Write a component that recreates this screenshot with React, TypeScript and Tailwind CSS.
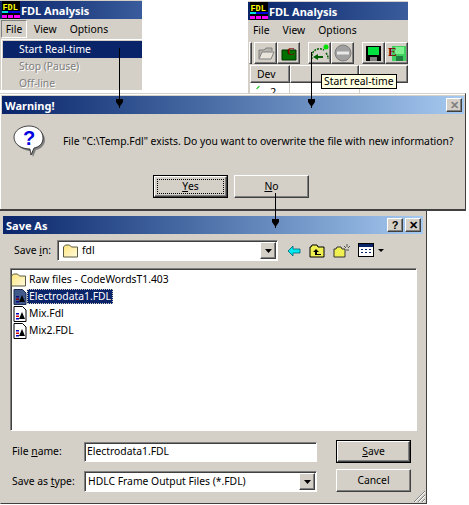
import { ReactNode } from "react"

const gray = "bg-[#d4d0c8]"
const font = "font-['Noto_Sans',sans-serif] text-[10.35px] leading-none"
const raised = "border border-t-white border-l-white border-r-[#404040] border-b-[#404040] shadow-[inset_-1px_-1px_0_#808080]"
const sunken = "border border-t-[#808080] border-l-[#808080] border-r-white border-b-white shadow-[inset_1px_1px_0_#404040]"

function Logo() {
  return (
    <svg width="18" height="18" viewBox="0 0 18 18" className="shrink-0">
      <rect width="18" height="18" fill="#000" />
      <rect x="0" y="10" width="6" height="2" fill="#00e0e0" />
      <rect x="6" y="10" width="12" height="2" fill="#0000e0" />
      <rect x="0" y="14" width="18" height="3" fill="#ff00ff" />
      <rect x="5" y="14" width="1" height="3" fill="#000" />
      <rect x="11" y="14" width="1" height="3" fill="#000" />
      <text x="0.5" y="9" fontSize="8.5" fontWeight="bold" fill="#ffff00" fontFamily="Liberation Mono">FDL</text>
    </svg>
  )
}

function TitleBar({ title, wide, logo, children }: { title: string; wide?: boolean; logo?: boolean; children?: ReactNode }) {
  return (
    <div className={`flex items-center h-[18px] bg-gradient-to-r from-[#0a246a] ${wide ? "to-[#a6caf0]" : "to-[#3a5c9c]"} pl-[2px] pr-[2px]`}>
      {logo && <Logo />}
      <span className="ml-[1px] text-white font-bold font-['Noto_Sans',sans-serif] text-[11px]">{title}</span>
      <div className="ml-auto flex gap-[2px]">{children}</div>
    </div>
  )
}

function CaptionButton({ glyph, dim }: { glyph: string; dim?: boolean }) {
  return (
    <div className={`${gray} ${raised} w-[16px] h-[14px] flex items-center justify-center font-['Liberation_Sans',sans-serif] font-bold text-[11px] ${dim ? "text-[#808080]" : "text-black"}`}>
      {glyph}
    </div>
  )
}

function Arrow({ x, y, h }: { x: number; y: number; h: number }) {
  return (
    <svg width="7" height={h} viewBox={`0 0 7 ${h}`} className="absolute z-20" style={{ left: x - 3, top: y }}>
      <path d={`M3.5 0V${h}`} stroke="#000" strokeWidth="1" />
      <path d={`M0 ${h - 9}H7V${h - 6}L3.5 ${h - 1}L0 ${h - 6}Z`} fill="#000" />
    </svg>
  )
}

function WinButton({ under, rest, isDefault }: { under: string; rest: string; isDefault?: boolean }) {
  return (
    <div className={`w-[75px] h-[23px] ${isDefault ? "border border-black" : ""}`}>
      <div className={`${raised} w-full h-full flex items-center justify-center text-black ${font}`}>
        <span className="underline">{under}</span>
        {rest}
      </div>
    </div>
  )
}

function FolderIcon() {
  return (
    <svg width="15" height="14" viewBox="0 0 15 14" className="shrink-0">
      <defs>
        <linearGradient id="folderFill" x1="0" y1="0" x2="1" y2="1">
          <stop offset="0" stopColor="#ffe47a" />
          <stop offset="1" stopColor="#fffbe0" />
        </linearGradient>
      </defs>
      <path d="M.5 3L2.500 1H6.500L8.500 3H14.500V13H.5Z" fill="url(#folderFill)" stroke="#5a5a40" />
    </svg>
  )
}

function FdlFileIcon({ selected }: { selected?: boolean }) {
  return (
    <svg width="14" height="16" viewBox="0 0 14 16" className="shrink-0">
      <path d="M1 .5H9.5L13 4V15.5H1Z" fill={selected ? "#42598c" : "#fff"} stroke={selected ? "#1a2a50" : "#000"} />
      <rect x="3" y="7" width="3" height="1.5" fill={selected ? "#0a0a80" : "#0000c0"} />
      <rect x="3" y="9.5" width="3" height="1.5" fill={selected ? "#800000" : "#e00000"} />
      <rect x="3" y="12" width="3" height="1.5" fill={selected ? "#0a0a80" : "#0000c0"} />
      <path d="M6 13L9 6L12 13Z" fill="#000" />
    </svg>
  )
}

function ToolButton({ children }: { children: ReactNode }) {
  return <div className={`${raised} w-[23px] h-[22px] flex items-center justify-center shrink-0`}>{children}</div>
}

function Toolbar() {
  return (
    <div className="flex items-center h-[24px] pl-[1px]">
      <div className={`${raised} w-[3px] h-[22px] mr-[2px]`} />
      <ToolButton>
        <svg width="18" height="16" viewBox="0 0 18 16">
          <path d="M2 14V5H7L9 3H15V6" fill="#b8b4ac" stroke="#808080" />
          <path d="M2 14L5 7H17L14 14Z" fill="#e8e4dc" stroke="#808080" />
        </svg>
      </ToolButton>
      <ToolButton>
        <svg width="16" height="16" viewBox="0 0 16 16">
          <path d="M1 5H15V15H1Z" fill="#007000" stroke="#003000" />
          <text x="6" y="10" fontSize="11" fontWeight="bold" fill="#800000" fontFamily="Liberation Serif">C</text>
        </svg>
      </ToolButton>
      <div className="w-[8px]" />
      <ToolButton>
        <svg width="20" height="18" viewBox="0 0 20 18">
          <path d="M2 15A8 8 0 0 1 14 6" fill="none" stroke="#006000" strokeWidth="1.5" strokeDasharray="2 1" />
          <path d="M16 9A8 8 0 0 1 18 15" fill="none" stroke="#006000" strokeWidth="1.5" strokeDasharray="2 1" />
          <circle cx="16" cy="3" r="2.5" fill="#00e000" />
          <path d="M3 13L8 10V12H13V14H8V16Z" fill="#006000" />
        </svg>
      </ToolButton>
      <ToolButton>
        <svg width="18" height="18" viewBox="0 0 18 18">
          <circle cx="9" cy="9" r="8" fill="#a0a0a0" stroke="#808080" />
          <rect x="3" y="7.5" width="12" height="3" fill="#e8e8e8" />
        </svg>
      </ToolButton>
      <div className="w-[8px]" />
      <ToolButton>
        <svg width="15" height="15" viewBox="0 0 15 15">
          <rect width="15" height="15" fill="#000" />
          <rect x="2" y="1" width="11" height="8" fill="#00e040" />
          <rect x="4" y="11" width="7" height="4" fill="#808080" />
        </svg>
      </ToolButton>
      <ToolButton>
        <svg width="18" height="18" viewBox="0 0 18 18">
          <rect x="4" y="2" width="14" height="15" fill="#40d060" />
          <rect x="7" y="3" width="9" height="7" fill="#80f090" />
          <rect x="8" y="12" width="7" height="5" fill="#208040" />
          <text x="0" y="12" fontSize="13" fontWeight="bold" fill="#800000" fontFamily="Liberation Serif">E</text>
        </svg>
      </ToolButton>
    </div>
  )
}

function LeftFragment() {
  return (
    <div className={`absolute left-0 top-0 w-[142px] h-[90px] ${gray} pt-[1px] ${font}`}>
      <TitleBar title="FDL Analysis" logo />
      <div className="flex items-center h-[20px] text-black">
        <div className="border border-t-[#808080] border-l-[#808080] border-r-white border-b-white w-[26px] h-[18px] flex items-center justify-center ml-[1px]">
          File
        </div>
        <div className="ml-[7px]">View</div>
        <div className="ml-[13px]">Options</div>
      </div>
      <div className="border-l border-t border-white ml-[1px] h-[51px] pt-[1px] pl-[1px]">
        <div className="h-[17px] bg-[#0a246a] text-white flex items-center pl-[16px]">Start Real-time</div>
        <div className="h-[17px] text-[#808080] flex items-center pl-[16px] [text-shadow:1px_1px_0_#fff]">Stop (Pause)</div>
        <div className="h-[17px] text-[#808080] flex items-center pl-[16px] [text-shadow:1px_1px_0_#fff]">Off-line</div>
      </div>
    </div>
  )
}

function RightFragment() {
  return (
    <div className={`absolute left-[248px] top-[1px] w-[160px] h-[92px] ${gray} overflow-hidden ${font}`}>
      <div className="pt-[1px]">
        <TitleBar title="FDL Analysis" logo />
      </div>
      <div className="flex items-center h-[21px] text-black pl-[5px] gap-[13px]">
        <span>File</span>
        <span>View</span>
        <span>Options</span>
      </div>
      <Toolbar />
      <div className="flex pl-[2px] h-[18px] text-black">
        <div className={`${raised} w-[40px] flex items-center pl-[6px]`}>Dev</div>
        <div className={`${raised} w-[70px]`} />
        <div className={`${raised} w-[50px]`} />
      </div>
      <div className="bg-white ml-[2px] h-[11px] relative text-black">
        <span className="absolute left-[6px] top-[4px] w-[4px] h-[1px] bg-[#00c000] -rotate-45" />
        <span className="absolute left-[20px] top-[3px] text-[11px]">2</span>
        <span className="absolute left-[39px] top-0 w-[1px] h-full bg-[#d4d0c8]" />
        <span className="absolute left-[109px] top-0 w-[1px] h-full bg-[#d4d0c8]" />
      </div>
    </div>
  )
}

function WarningDialog() {
  return (
    <div className={`absolute left-0 top-[93px] w-[466px] h-[118px] ${gray} border-t border-t-[#d4d0c8] border-r border-r-[#404040] border-b-2 border-b-[#404040] ${font}`}>
      <div className="border-t border-l border-white h-full flex flex-col pt-[1px] pl-[1px] pr-[1px]">
        <TitleBar title="Warning!" wide>
          <CaptionButton glyph="✕" dim />
        </TitleBar>
        <div className="flex items-center pl-[11px] pt-[11px]">
          <svg width="33" height="33" viewBox="0 0 33 33" className="shrink-0">
            <path d="M17 3C25 3 32 8 32 15C32 20 28 24 23 25L20 32L18 26C10 26 3 21 3 14C3 8 9 3 17 3Z" fill="#808080" />
            <path d="M16 1C24 1 30 6 30 13C30 19 26 22 21 23L18 30L17 24C9 24 1 20 1 12C1 6 8 1 16 1Z" fill="#fff" stroke="#000" strokeWidth="0.7" />
            <text x="10" y="20" fontSize="20" fontWeight="bold" fill="#0000e0" fontFamily="Liberation Sans">?</text>
          </svg>
          <span className="ml-[17px] text-black whitespace-nowrap">File "C:\Temp.Fdl" exists. Do you want to overwrite the file with new information?</span>
        </div>
        <div className="flex justify-center gap-[6px] mt-[17px] pr-[4px]">
          <div className="w-[75px] h-[23px] border border-black">
            <div className={`${raised} w-full h-full flex items-center justify-center p-[2px]`}>
              <div className="w-full h-full border border-dotted border-black flex items-center justify-center text-black">
                <span className="underline">Y</span>es
              </div>
            </div>
          </div>
          <WinButton under="N" rest="o" />
        </div>
      </div>
    </div>
  )
}

function SaveToolbarIcons() {
  return (
    <div className="flex items-center ml-[9px] gap-[8px]">
      <svg width="14" height="12" viewBox="0 0 14 12">
        <path d="M1 6L6 1V4H13V8H6V11Z" fill="#00e8f0" stroke="#006070" strokeWidth="0.8" />
      </svg>
      <svg width="16" height="14" viewBox="0 0 16 14">
        <path d="M1 13V3H2L3 1H8L9 3H15V13Z" fill="#f0f050" stroke="#000" />
        <path d="M7 5L4 8H6V11H12V10H8V8H10Z" fill="#000" />
      </svg>
      <svg width="17" height="15" viewBox="0 0 17 15">
        <path d="M1 14V6H3L4 4H8L9 6H12V14Z" fill="#f0f050" stroke="#333" />
        <path d="M14 1V4M11 3L13 5M17 3L15 5M13 7H16" stroke="#555" fill="none" />
      </svg>
      <svg width="27" height="15" viewBox="0 0 27 15">
        <rect x=".5" y=".5" width="15" height="13" fill="#fff" stroke="#000" />
        <rect x="1" y="1" width="14" height="3" fill="#0a246a" />
        <path d="M3 6h2v1h-2zM7 6h2v1h-2zM11 6h2v1h-2zM3 9h2v1h-2zM7 9h2v1h-2zM11 9h2v1h-2z" fill="#0a246a" />
        <path d="M20 6H26L23 9Z" fill="#000" />
      </svg>
    </div>
  )
}

function FileRow({ name, selected, folder }: { name: string; selected?: boolean; folder?: boolean }) {
  return (
    <div className={`flex items-center h-[17px] ${folder ? "gap-[1px]" : "pl-[2px]"}`}>
      {folder ? <FolderIcon /> : <FdlFileIcon selected={selected} />}
      <span className={`px-[1px] h-[15px] flex items-center whitespace-nowrap ${selected ? "bg-[#0a246a] text-white border border-dotted border-[#d4d0c8]" : "text-black border border-transparent"}`}>{name}</span>
    </div>
  )
}

function DropArrow({ h }: { h: string }) {
  return (
    <div className={`${gray} ${raised} ml-auto w-[16px] ${h} flex items-center justify-center`}>
      <svg width="7" height="4" viewBox="0 0 7 4"><path d="M0 0H7L3.5 4Z" fill="#000" /></svg>
    </div>
  )
}

function SaveDialog() {
  return (
    <div className={`absolute left-0 top-[211px] w-[427px] h-[293px] ${gray} border-l border-r border-b border-r-[#404040] border-b-[#404040] border-l-[#d4d0c8] ${font}`}>
      <div className="pt-[5px] pl-[2px] pr-[3px]">
        <TitleBar title="Save As" wide>
          <CaptionButton glyph="?" />
          <CaptionButton glyph="✕" />
        </TitleBar>
      </div>
      <div className="flex items-center pl-[13px] pt-[6px]">
        <span className="w-[43px] text-black">Save <span className="underline">i</span>n:</span>
        <div className={`${sunken} w-[221px] h-[21px] bg-white flex items-center pl-[5px] pr-[1px] gap-[4px] text-black`}>
          <FolderIcon />
          <span>fdl</span>
          <DropArrow h="h-[17px]" />
        </div>
        <SaveToolbarIcons />
      </div>
      <div className={`${sunken} ml-[9px] mt-[7px] w-[407px] h-[163px] bg-white pt-[2px]`}>
        <FileRow name="Raw files - CodeWordsT1.403" folder />
        <FileRow name="Electrodata1.FDL" selected />
        <FileRow name="Mix.Fdl" />
        <FileRow name="Mix2.FDL" />
      </div>
      <div className="flex pl-[11px] pt-[10px]">
        <div className="flex flex-col">
          <div className="flex items-center h-[21px]">
            <span className="w-[72px] text-black">File <span className="underline">n</span>ame:</span>
            <div className={`${sunken} w-[233px] h-[20px] bg-white flex items-center pl-[2px] text-black`}>Electrodata1.FDL</div>
          </div>
          <div className="flex items-center h-[21px] mt-[9px]">
            <span className="w-[72px] text-black">Save as <span className="underline">t</span>ype:</span>
            <div className={`${sunken} w-[233px] h-[21px] bg-white flex items-center pl-[3px] pr-[1px] text-black`}>
              <span>HDLC Frame Output Files (*.FDL)</span>
              <DropArrow h="h-[17px]" />
            </div>
          </div>
        </div>
        <div className="flex flex-col ml-[19px] gap-[6px] -mt-[1px]">
          <WinButton under="S" rest="ave" isDefault />
          <WinButton under="" rest="Cancel" />
        </div>
      </div>
      <svg width="12" height="12" viewBox="0 0 12 12" className="absolute right-[1px] bottom-[1px]">
        <path d="M12 1L1 12M12 5L5 12M12 9L9 12" stroke="#808080" />
        <path d="M12 2L2 12M12 6L6 12M12 10L10 12" stroke="#fff" />
      </svg>
    </div>
  )
}

export default function App() {
  return (
    <div className="relative w-[469px] h-[505px] bg-white overflow-hidden">
      <LeftFragment />
      <RightFragment />
      <WarningDialog />
      <SaveDialog />
      <div className="absolute left-[321px] top-[74px] z-10 h-[15px] px-[2px] bg-[#ffffe1] border border-black flex items-center text-black font-['Noto_Sans',sans-serif] text-[10.35px] whitespace-nowrap">Start real-time</div>
      <Arrow x={119} y={48} h={60} />
      <Arrow x={311} y={52} h={56} />
      <Arrow x={275} y={193} h={35} />
    </div>
  )
}
